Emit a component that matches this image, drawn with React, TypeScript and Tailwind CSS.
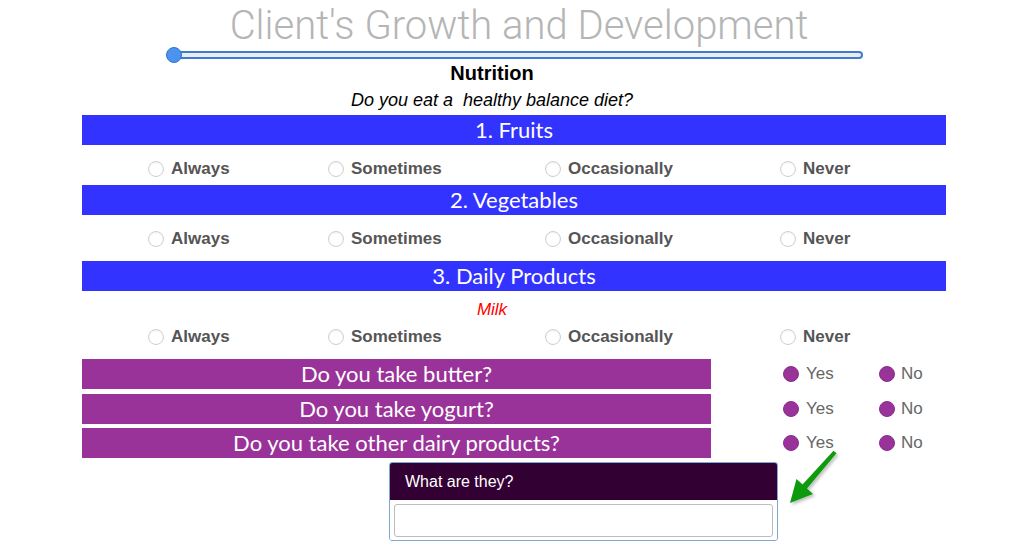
import React from 'react';

const options = ['Always', 'Sometimes', 'Occasionally', 'Never'];

const Bar = ({ label }: { label: string }) => (
  <div
    className="ml-[82px] w-[864px] h-[30px] bg-[#3333ff] text-white text-center text-[22px] leading-[30px]"
    style={{ fontFamily: 'Lato, "Open Sans", sans-serif' }}
  >
    {label}
  </div>
);

const FrequencyRow = ({ className = '' }: { className?: string }) => (
  <div className={`ml-[148px] grid grid-cols-[180px_217px_235px_160px] items-center ${className}`}>
    {options.map(o => (
      <label key={o} className="flex items-center gap-[7px]">
        <span className="w-[16px] h-[16px] rounded-full border border-[#cfcfcf] bg-white shadow-[inset_0_1px_2px_rgba(0,0,0,0.06)]" />
        <span
          className="text-[17px] font-bold text-[#555555]"
          style={{ fontFamily: '"Liberation Sans", Arial, sans-serif' }}
        >
          {o}
        </span>
      </label>
    ))}
  </div>
);

const YesNo = () => (
  <div className="flex items-center ml-[72px]" style={{ fontFamily: '"Liberation Sans", Arial, sans-serif' }}>
    <label className="flex items-center gap-[7px] w-[96px]">
      <span className="w-[16px] h-[16px] rounded-full bg-[#993399] border border-[#8a2d8a]" />
      <span className="text-[17px] text-[#666666]">Yes</span>
    </label>
    <label className="flex items-center gap-[6px]">
      <span className="w-[16px] h-[16px] rounded-full bg-[#993399] border border-[#8a2d8a]" />
      <span className="text-[17px] text-[#666666]">No</span>
    </label>
  </div>
);

const DairyQuestion = ({ label, className = '' }: { label: string; className?: string }) => (
  <div className={`flex items-center ${className}`}>
    <div
      className="ml-[82px] w-[629px] h-[30px] bg-[#993399] text-white text-center text-[22px] leading-[30px]"
      style={{ fontFamily: 'Lato, "Open Sans", sans-serif' }}
    >
      {label}
    </div>
    <YesNo />
  </div>
);

export default function App() {
  return (
    <div className="relative w-[1028px] h-[545px] bg-white overflow-hidden">
      <h1
        className="text-center text-[40px] leading-[50px] font-light text-[#b5b5b5] pl-[10px] pt-[1px]"
        style={{ fontFamily: 'Roboto, sans-serif' }}
      >
        Client's Growth and Development
      </h1>

      <div className="relative ml-[167px] w-[696px] h-[8px] rounded-full border-2 border-[#3b7cd6] bg-[#ececec]">
        <div className="absolute left-[-3px] top-[-6px] w-[16px] h-[16px] rounded-full bg-[#4c93ee] border border-[#3272cc]" />
      </div>

      <div className="ml-[82px] w-[820px] text-center text-black" style={{ fontFamily: '"Liberation Sans", Arial, sans-serif' }}>
        <div className="text-[20px] font-bold leading-[24px] mt-[2px]">Nutrition</div>
        <div className="text-[18px] italic leading-[22px] mt-[4px]">Do you eat a&nbsp; healthy balance diet?</div>
      </div>

      <div className="mt-[4px]">
        <Bar label="1. Fruits" />
        <FrequencyRow className="h-[40px] pt-[8px]" />
        <Bar label="2. Vegetables" />
        <FrequencyRow className="h-[46px] pt-[2px]" />
        <Bar label="3. Daily Products" />
        <div
          className="ml-[82px] w-[820px] text-center text-[17px] italic text-[#ff0000] leading-[22px] mt-[8px]"
          style={{ fontFamily: '"Liberation Sans", Arial, sans-serif' }}
        >
          Milk
        </div>
        <FrequencyRow className="h-[32px]" />
      </div>

      <div className="mt-[6px]">
        <DairyQuestion label="Do you take butter?" />
        <DairyQuestion label="Do you take yogurt?" className="mt-[5px]" />
        <DairyQuestion label="Do you take other dairy products?" className="mt-[4px]" />
      </div>

      <div className="ml-[389px] mt-[4px] w-[389px] h-[79px] rounded-[3px] border border-[#7ea9d4] overflow-hidden flex flex-col">
        <div
          className="h-[37px] bg-[#330033] text-white text-[16px] leading-[37px] pl-[15px]"
          style={{ fontFamily: '"Liberation Sans", Arial, sans-serif' }}
        >
          What are they?
        </div>
        <div className="flex-1 bg-white px-[4px] pt-[4px]">
          <input className="w-full h-[33px] rounded-[3px] border border-[#bdbdbd] outline-none" />
        </div>
      </div>

      <svg className="absolute left-[780px] top-[440px]" width="70" height="75" viewBox="0 0 70 75">
        <defs>
          <filter id="sh" x="-20%" y="-20%" width="140%" height="140%">
            <feDropShadow dx="2" dy="2" stdDeviation="1.5" floodColor="#000" floodOpacity="0.25" />
          </filter>
        </defs>
        <polygon
          points="10,63 33,54 27,48.5 56.5,13.3 53.5,10.7 22.5,44.5 16.5,39"
          fill="#0b9b0b"
          filter="url(#sh)"
        />
      </svg>
    </div>
  );
}
